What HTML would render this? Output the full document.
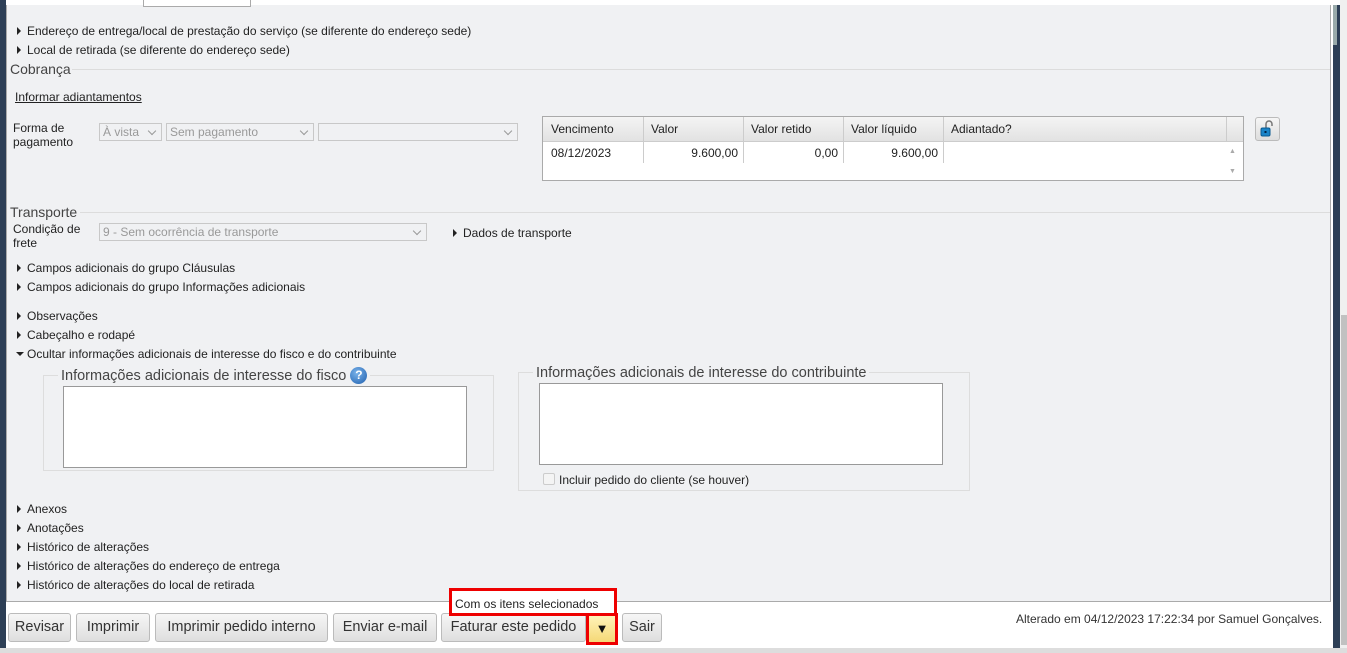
<!DOCTYPE html>
<html><head><meta charset="utf-8"><style>
*{margin:0;padding:0;box-sizing:border-box}
body{width:1347px;height:653px;overflow:hidden;background:#fff;font-family:"Liberation Sans",Tahoma,sans-serif;font-size:12px;color:#222;position:relative}
.a{position:absolute;white-space:nowrap;line-height:14px}
.t:before{content:"";display:inline-block;width:0;height:0;border-left:4px solid #222;border-top:4px solid transparent;border-bottom:4px solid transparent;margin:0 6px 0 1px;vertical-align:0px}
.sel{position:absolute;height:18px;border:1px solid #c8c8c8;background:#f0f1f3;color:#999;line-height:16px;padding-left:3px;font-size:12px}
.sel:after{content:"";position:absolute;right:6px;top:4px;width:5px;height:5px;border-right:1.5px solid #999;border-bottom:1.5px solid #999;transform:rotate(45deg)}
.btn{position:absolute;top:613px;height:29px;border:1px solid #bbb;border-radius:3px;background:linear-gradient(#f6f6f6,#dedede);font-size:14.5px;line-height:27px;text-align:center;color:#333}
.leg{position:absolute;border:1px solid #ddd}
.ta{position:absolute;background:#fff;border:1px solid #999}
.hl{position:absolute;height:1px;background:#dcdcdc}
</style></head><body>
<div style="position:absolute;left:0;top:0;width:6px;height:648px;background:#2d3f56"></div>
<div style="position:absolute;left:6px;top:5px;width:1325px;height:597px;background:#f0f1f3;border:1px solid #aaa;border-top:none"></div>
<div style="position:absolute;left:143px;top:0;width:108px;height:7px;border:1px solid #aaa;border-top:none;background:#fff"></div>
<div style="position:absolute;left:1333px;top:5px;width:7px;height:643px;background:#2d3f56"></div>
<div style="position:absolute;left:1333px;top:5px;width:4px;height:40px;background:#9aa"></div>
<div style="position:absolute;left:1340px;top:0;width:7px;height:653px;background:#f0f0f0"></div>
<div style="position:absolute;left:1341px;top:315px;width:6px;height:330px;background:#c1c1c1"></div>
<div style="position:absolute;left:0;top:648px;width:1347px;height:5px;background:#ddd"></div>

<div class="a t" style="left:16px;top:24px">Endereço de entrega/local de prestação do serviço (se diferente do endereço sede)</div>
<div class="a t" style="left:16px;top:43px">Local de retirada (se diferente do endereço sede)</div>
<div class="a" style="left:10px;top:62px;font-size:14px;color:#444">Cobrança</div>
<div class="hl" style="left:72px;top:69px;width:1258px"></div>
<div class="a" style="left:15px;top:90px;text-decoration:underline">Informar adiantamentos</div>
<div class="a" style="left:13px;top:121px;line-height:14px">Forma de<br>pagamento</div>
<div class="sel" style="left:99px;top:123px;width:63px">À vista</div>
<div class="sel" style="left:166px;top:123px;width:148px">Sem pagamento</div>
<div class="sel" style="left:318px;top:123px;width:200px"></div>

<div style="position:absolute;left:542px;top:116px;width:702px;height:65px;border:1px solid #aaa;background:#fff"></div>
<div style="position:absolute;left:543px;top:117px;width:700px;height:25px;background:linear-gradient(#f4f4f4,#e2e2e2);border-bottom:1px solid #ccc"></div>
<div class="a" style="left:551px;top:122px">Vencimento</div>
<div class="a" style="left:651px;top:122px">Valor</div>
<div class="a" style="left:751px;top:122px">Valor retido</div>
<div class="a" style="left:851px;top:122px">Valor líquido</div>
<div class="a" style="left:951px;top:122px">Adiantado?</div>
<div style="position:absolute;left:643px;top:117px;width:1px;height:46px;background:#ccc"></div>
<div style="position:absolute;left:743px;top:117px;width:1px;height:46px;background:#ccc"></div>
<div style="position:absolute;left:843px;top:117px;width:1px;height:46px;background:#ccc"></div>
<div style="position:absolute;left:943px;top:117px;width:1px;height:46px;background:#ccc"></div>
<div style="position:absolute;left:1226px;top:117px;width:1px;height:25px;background:#ccc"></div>
<div class="a" style="left:551px;top:146px">08/12/2023</div>
<div class="a" style="left:643px;top:146px;width:95px;text-align:right">9.600,00</div>
<div class="a" style="left:743px;top:146px;width:95px;text-align:right">0,00</div>
<div class="a" style="left:843px;top:146px;width:95px;text-align:right">9.600,00</div>
<div class="a" style="left:1229px;top:145px;font-size:7px;color:#aaa">▲</div>
<div class="a" style="left:1229px;top:165px;font-size:7px;color:#aaa">▼</div>
<div style="position:absolute;left:1255px;top:117px;width:25px;height:24px;border:1px solid #bbb;border-radius:3px;background:linear-gradient(#f6f6f6,#ddd)">
<svg width="23" height="22" viewBox="0 0 23 22"><path d="M10 10V6a3 3 0 0 1 6 0v2" fill="none" stroke="#777" stroke-width="1.5"/><rect x="5" y="10" width="9" height="8" rx="1.5" fill="#1a84c8" stroke="#0a5a90"/><rect x="8.5" y="13" width="2" height="2" fill="#024"/></svg></div>

<div class="a" style="left:10px;top:205px;font-size:14px;color:#444">Transporte</div>
<div class="hl" style="left:80px;top:212px;width:1250px"></div>
<div class="a" style="left:13px;top:222px">Condição de<br>frete</div>
<div class="sel" style="left:99px;top:223px;width:328px">9 - Sem ocorrência de transporte</div>
<div class="a t" style="left:452px;top:226px">Dados de transporte</div>
<div class="a t" style="left:16px;top:261px">Campos adicionais do grupo Cláusulas</div>
<div class="a t" style="left:16px;top:280px">Campos adicionais do grupo Informações adicionais</div>
<div class="a t" style="left:16px;top:309px">Observações</div>
<div class="a t" style="left:16px;top:328px">Cabeçalho e rodapé</div>
<div class="a" style="left:16px;top:347px"><span style="display:inline-block;width:0;height:0;border-top:4px solid #222;border-left:4px solid transparent;border-right:4px solid transparent;margin-right:3px;vertical-align:2px"></span>Ocultar informações adicionais de interesse do fisco e do contribuinte</div>

<div class="leg" style="left:43px;top:375px;width:451px;height:96px"></div>
<div class="a" style="left:58px;top:367px;font-size:14.5px;color:#444;background:#f0f1f3;padding:0 3px;line-height:17px">Informações adicionais de interesse do fisco <span style="display:inline-block;width:17px;height:17px;border-radius:50%;background:radial-gradient(circle at 40% 35%,#7ab3ea,#1f5fae);color:#fff;font-weight:bold;font-size:12px;text-align:center;line-height:17px;vertical-align:1px">?</span></div>
<div class="ta" style="left:63px;top:386px;width:404px;height:82px"></div>

<div class="leg" style="left:518px;top:372px;width:452px;height:119px"></div>
<div class="a" style="left:533px;top:365px;font-size:14.5px;color:#444;background:#f0f1f3;padding:0 3px;line-height:17px">Informações adicionais de interesse do contribuinte</div>
<div class="ta" style="left:539px;top:383px;width:404px;height:82px"></div>
<div style="position:absolute;left:543px;top:473px;width:12px;height:12px;border:1px solid #ccc;border-radius:2px;background:#f4f4f4"></div>
<div class="a" style="left:559px;top:473px">Incluir pedido do cliente (se houver)</div>

<div class="a t" style="left:16px;top:502px">Anexos</div>
<div class="a t" style="left:16px;top:521px">Anotações</div>
<div class="a t" style="left:16px;top:540px">Histórico de alterações</div>
<div class="a t" style="left:16px;top:559px">Histórico de alterações do endereço de entrega</div>
<div class="a t" style="left:16px;top:578px">Histórico de alterações do local de retirada</div>

<div class="btn" style="left:8px;width:63px">Revisar</div>
<div class="btn" style="left:76px;width:74px">Imprimir</div>
<div class="btn" style="left:155px;width:173px">Imprimir pedido interno</div>
<div class="btn" style="left:333px;width:104px">Enviar e-mail</div>
<div class="btn" style="left:441px;width:145px">Faturar este pedido</div>
<div class="btn" style="left:586px;width:32px;background:linear-gradient(#fff3b8,#f5d877);border:3px solid #e00;border-radius:0;top:613px;height:32px;line-height:25px;color:#111;font-size:13px">▼</div>
<div class="btn" style="left:622px;width:40px">Sair</div>
<div style="position:absolute;left:449px;top:588px;width:168px;height:28px;border:3px solid #e00;background:#fff"></div>
<div class="a" style="left:455px;top:597px">Com os itens selecionados</div>
<div class="a" style="left:1016px;top:612px;color:#333">Alterado em 04/12/2023 17:22:34 por Samuel Gonçalves.</div>
</body></html>
